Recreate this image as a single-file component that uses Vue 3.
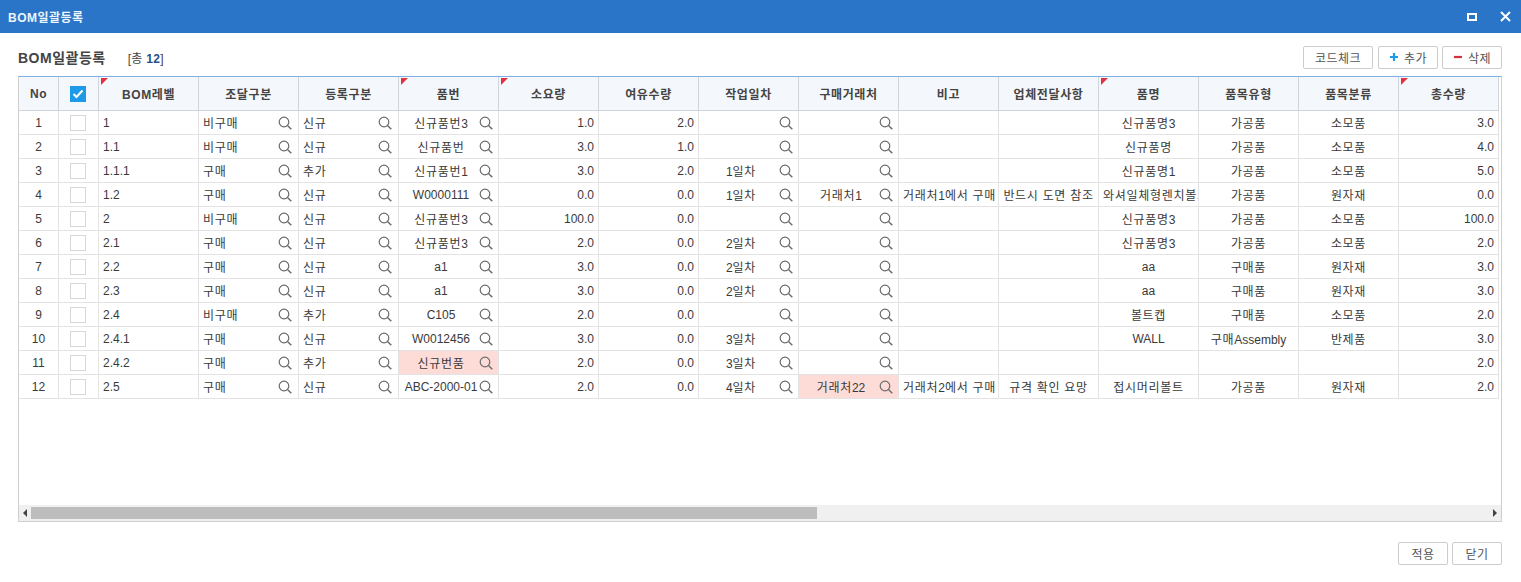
<script setup>
const columns = [
  { key: 'level', label: 'BOM레벨', align: 'left', mark: true },
  { key: 'supply', label: '조달구분', align: 'left', search: true },
  { key: 'reg', label: '등록구분', align: 'left', search: true },
  { key: 'part', label: '품번', align: 'center', search: true, mark: true },
  { key: 'qty', label: '소요량', align: 'right', mark: true },
  { key: 'spare', label: '여유수량', align: 'right' },
  { key: 'day', label: '작업일차', align: 'center', search: true },
  { key: 'vendor', label: '구매거래처', align: 'center', search: true },
  { key: 'note', label: '비고', align: 'left' },
  { key: 'msg', label: '업체전달사항', align: 'center' },
  { key: 'name', label: '품명', align: 'center', mark: true },
  { key: 'type', label: '품목유형', align: 'center' },
  { key: 'cat', label: '품목분류', align: 'center' },
  { key: 'total', label: '총수량', align: 'right', mark: true }
]
const r = (level, supply, reg, part, qty, spare, day, vendor, note, msg, name, type, cat, total, err = []) => ({ level, supply, reg, part, qty, spare, day, vendor, note, msg, name, type, cat, total, err })
const rows = [
  r('1', '비구매', '신규', '신규품번3', '1.0', '2.0', '', '', '', '', '신규품명3', '가공품', '소모품', '3.0'),
  r('1.1', '비구매', '신규', '신규품번', '3.0', '1.0', '', '', '', '', '신규품명', '가공품', '소모품', '4.0'),
  r('1.1.1', '구매', '추가', '신규품번1', '3.0', '2.0', '1일차', '', '', '', '신규품명1', '가공품', '소모품', '5.0'),
  r('1.2', '구매', '신규', 'W0000111', '0.0', '0.0', '1일차', '거래처1', '거래처1에서 구매', '반드시 도면 참조', '와셔일체형렌치볼트', '가공품', '원자재', '0.0'),
  r('2', '비구매', '신규', '신규품번3', '100.0', '0.0', '', '', '', '', '신규품명3', '가공품', '소모품', '100.0'),
  r('2.1', '구매', '신규', '신규품번3', '2.0', '0.0', '2일차', '', '', '', '신규품명3', '가공품', '소모품', '2.0'),
  r('2.2', '구매', '신규', 'a1', '3.0', '0.0', '2일차', '', '', '', 'aa', '구매품', '원자재', '3.0'),
  r('2.3', '구매', '신규', 'a1', '3.0', '0.0', '2일차', '', '', '', 'aa', '구매품', '원자재', '3.0'),
  r('2.4', '비구매', '추가', 'C105', '2.0', '0.0', '', '', '', '', '볼트캡', '구매품', '소모품', '2.0'),
  r('2.4.1', '구매', '신규', 'W0012456', '3.0', '0.0', '3일차', '', '', '', 'WALL', '구매Assembly', '반제품', '3.0'),
  r('2.4.2', '구매', '추가', '신규번품', '2.0', '0.0', '3일차', '', '', '', '', '', '', '2.0', ['part']),
  r('2.5', '구매', '신규', 'ABC-2000-01', '2.0', '0.0', '4일차', '거래처22', '거래처2에서 구매', '규격 확인 요망', '접시머리볼트', '가공품', '원자재', '2.0', ['vendor'])
]
// Hangul runs are set slightly wider than Latin runs, as in the reference.
const segments = (text) => (text.match(/[가-힣 ]+|[^가-힣 ]+/g) || []).map((t) => ({ t, ko: /[가-힣]/.test(t) }))
</script>

<template>
  <div class="page">
    <header class="titlebar">
      <span class="title">BOM일괄등록</span>
      <div class="win-actions">
        <span class="win-max"></span>
        <svg class="win-close" width="11" height="11" viewBox="0 0 11 11"><path d="M1 1l9 9M10 1l-9 9" stroke="#fff" stroke-width="2" fill="none" /></svg>
      </div>
    </header>

    <div class="toolbar">
      <h2 class="heading">BOM일괄등록</h2>
      <span class="count">[총 <b>12</b>]</span>
      <div class="tools">
        <button class="btn code">코드체크</button>
        <button class="btn tool">
          <svg width="10" height="10" viewBox="0 0 10 10"><path d="M5 1v8M1 5h8" stroke="#1e9be8" stroke-width="2.2" fill="none" /></svg>
          추가
        </button>
        <button class="btn tool">
          <svg width="10" height="10" viewBox="0 0 10 10"><path d="M1 5h8" stroke="#d1303c" stroke-width="2.2" fill="none" /></svg>
          삭제
        </button>
      </div>
    </div>

    <section class="grid">
      <div class="scroll-area">
        <div class="row head">
          <div class="cell no">No</div>
          <div class="cell chk">
            <span class="check on">
              <svg width="12" height="10" viewBox="0 0 12 10"><path d="M1.5 5l3 3 6-6.5" stroke="#fff" stroke-width="2" fill="none" /></svg>
            </span>
          </div>
          <div v-for="c in columns" :key="c.key" class="cell col">
            <i v-if="c.mark" class="mark"></i>
            {{ c.label }}
          </div>
        </div>
        <div v-for="(row, i) in rows" :key="i" class="row body">
          <div class="cell no">{{ i + 1 }}</div>
          <div class="cell chk"><span class="check"></span></div>
          <div
            v-for="c in columns"
            :key="c.key"
            class="cell col"
            :class="[c.align, { err: row.err.includes(c.key), searchable: c.search }]"
          >
            <span class="txt"><span v-for="(s, j) in segments(row[c.key])" :key="j" :class="{ ko: s.ko }">{{ s.t }}</span></span>
            <svg v-if="c.search" class="search" width="14" height="14" viewBox="0 0 14 14">
              <circle cx="6" cy="6" r="4.8" stroke="#6a6a6a" stroke-width="1.2" fill="none" />
              <path d="M9.5 9.5l3.8 3.8" stroke="#6a6a6a" stroke-width="1.4" fill="none" />
            </svg>
          </div>
        </div>
      </div>
      <div class="hscroll">
        <span class="arrow left"></span>
        <div class="track"><div class="thumb"></div></div>
        <span class="arrow right"></span>
      </div>
    </section>

    <footer class="footer">
      <button class="btn foot">적용</button>
      <button class="btn foot">닫기</button>
    </footer>
  </div>
</template>

<style scoped>
.page {
  width: 1521px;
  height: 582px;
  display: flex;
  flex-direction: column;
  overflow: hidden;
  background: #fff;
  color: #3a3a3a;
  font-family: "Liberation Sans", "Noto Sans CJK KR", sans-serif;
  font-size: 12px;
}
.titlebar {
  height: 33px;
  flex: none;
  display: flex;
  align-items: center;
  justify-content: space-between;
  padding: 0 10px 0 8px;
  background: #2a75c7;
  color: #fff;
}
.title { font-size: 12px; font-weight: bold; color: #eef4fb; letter-spacing: 0.5px; }
.win-actions { display: flex; align-items: center; gap: 23px; }
.win-max { width: 10px; height: 8px; border: 2px solid #fff; box-sizing: border-box; }
.toolbar {
  height: 43px;
  flex: none;
  display: flex;
  align-items: center;
  padding: 5px 19px 0 18px;
  box-sizing: border-box;
}
.heading { margin: 0; font-size: 14px; font-weight: bold; color: #444; letter-spacing: 0.5px; }
.count { margin-left: 22px; font-size: 12px; color: #444; letter-spacing: 0.3px; }
.count b { color: #2b4f86; }
.tools { margin-left: auto; display: flex; gap: 4px; }
.tools .code { margin-right: 1px; }
.btn {
  height: 23px;
  padding: 0;
  display: inline-flex;
  align-items: center;
  justify-content: center;
  gap: 5px;
  background: #fff;
  border: 1px solid #ccc;
  border-radius: 2px;
  box-sizing: border-box;
  color: #555;
  font: 12px "Liberation Sans", "Noto Sans CJK KR", sans-serif;
  letter-spacing: 0.5px;
}
.code { width: 70px; }
.tool { width: 60px; }
.foot { width: 50px; }
.grid {
  margin-left: 18px;
  width: 1484px;
  height: 446px;
  flex: none;
  box-sizing: border-box;
  display: flex;
  flex-direction: column;
  border: 1px solid #cfcfcf;
  border-top: 1px solid #7fb0e0;
  overflow: hidden;
}
.scroll-area { flex: 1; min-height: 0; overflow: hidden; }
.row { display: flex; width: 1480px; }
.head { height: 34px; background: #f4f7fb; font-weight: bold; color: #444; letter-spacing: 0.6px; }
.body { height: 24px; }
.cell {
  position: relative;
  flex: none;
  box-sizing: border-box;
  display: flex;
  align-items: center;
  justify-content: center;
  overflow: hidden;
  white-space: nowrap;
  border-right: 1px solid #e3e3e3;
  border-bottom: 1px solid #e3e3e3;
}
.head .cell { border-right-color: #cfd4da; border-bottom-color: #cfd4da; }
.no, .chk { width: 40px; }
.chk .check { margin-right: 1px; }
.col { width: 100px; }
.check {
  width: 16px;
  height: 16px;
  box-sizing: border-box;
  display: flex;
  align-items: center;
  justify-content: center;
  background: #fff;
  border: 1px solid #d8d8d8;
}
.check.on { background: #1e9be8; border-color: #1e9be8; }
.mark {
  position: absolute;
  top: 1px;
  left: 2px;
  width: 0;
  height: 0;
  border-top: 7px solid #e0323f;
  border-right: 7px solid transparent;
}
.txt { flex: 1; min-width: 0; }
.ko { letter-spacing: 0.7px; }
.left .txt { text-align: left; padding-left: 4px; }
.center .txt { text-align: center; padding: 0 4px; }
.center.searchable .txt { padding: 0 0 0 4px; }
.right .txt { text-align: right; padding-right: 4px; }
.search { flex: none; margin-right: 5px; }
.left .search { margin-right: 6px; }
.err { background: #fddcd8; }
.hscroll {
  height: 16px;
  flex: none;
  display: flex;
  align-items: center;
  background: #f0f0f0;
}
.track { flex: 1; height: 12px; }
.thumb { width: 786px; height: 12px; background: #bdbdbd; }
.arrow { width: 12px; flex: none; display: flex; justify-content: center; }
.arrow::before { content: ""; border-top: 4px solid transparent; border-bottom: 4px solid transparent; }
.arrow.left::before { border-right: 4px solid #444; }
.arrow.right::before { border-left: 4px solid #444; }
.footer {
  flex: none;
  display: flex;
  justify-content: flex-end;
  gap: 4px;
  padding: 20px 19px 0 0;
}
</style>
